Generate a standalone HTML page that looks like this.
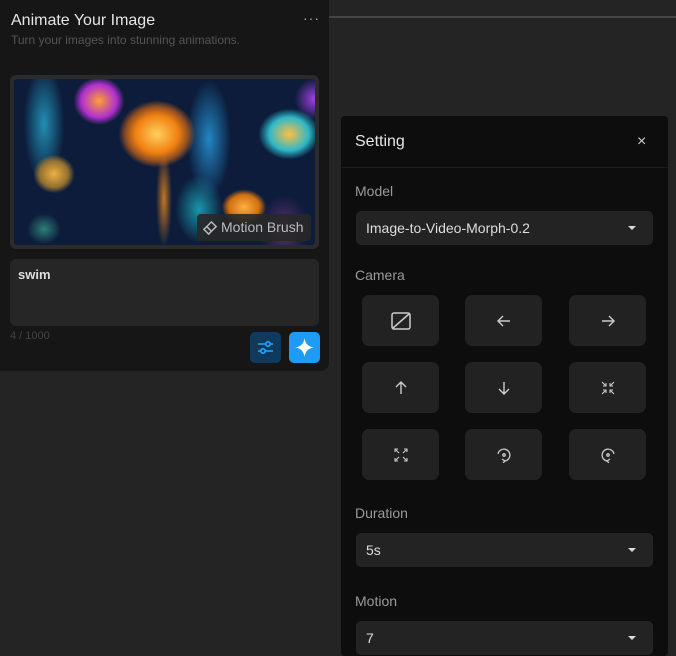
<!DOCTYPE html>
<html><head><meta charset="utf-8"><style>
*{margin:0;padding:0;box-sizing:border-box}
body{width:676px;height:643px;background:#242424;font-family:"Liberation Sans",sans-serif;position:relative;overflow:hidden;color:#ddd}
.abs{position:absolute}
.left{left:0;top:0;width:329px;height:371px;background:#161616;border-radius:0 0 8px 0}
.img{left:10px;top:75px;width:309px;height:174px;border-radius:6px;background:#2b2b2b;padding:4px;overflow:hidden}
.pic{width:100%;height:100%;border-radius:3px;position:relative;overflow:hidden;
background:
radial-gradient(ellipse 48px 42px at 143px 55px,#ffd060,#f08010 45%,rgba(230,110,20,.6) 65%,rgba(0,0,0,0) 80%),
radial-gradient(ellipse 40px 34px at 95px 195px,#ffb030,#a030e0 50%,rgba(120,30,200,.6) 70%,rgba(0,0,0,0) 85%),
radial-gradient(ellipse 32px 30px at 85px 22px,#ffa030,#b030d0 55%,rgba(0,0,0,0) 80%),
radial-gradient(ellipse 36px 30px at 275px 55px,#ffc040,#30b8c8 55%,rgba(40,180,200,.5) 70%,rgba(0,0,0,0) 85%),
radial-gradient(ellipse 26px 24px at 40px 95px,#f0b040,#907030 55%,rgba(0,0,0,0) 80%),
radial-gradient(ellipse 28px 22px at 230px 128px,#ffb040,#d07010 55%,rgba(0,0,0,0) 80%),
radial-gradient(ellipse 10px 60px at 150px 120px,rgba(240,140,30,.8),rgba(0,0,0,0) 80%),
radial-gradient(ellipse 26px 70px at 195px 60px,rgba(40,160,230,.8),rgba(0,0,0,0) 85%),
radial-gradient(ellipse 24px 70px at 30px 45px,rgba(40,170,210,.8),rgba(0,0,0,0) 85%),
radial-gradient(ellipse 28px 40px at 185px 130px,rgba(30,180,200,.8),rgba(0,0,0,0) 85%),
radial-gradient(ellipse 24px 26px at 300px 20px,#a040e0,rgba(0,0,0,0) 80%),
radial-gradient(ellipse 30px 40px at 270px 150px,rgba(150,60,150,.6),rgba(0,0,0,0) 85%),
radial-gradient(ellipse 20px 18px at 30px 150px,rgba(60,170,150,.7),rgba(0,0,0,0) 85%),
#0c1c3a}
.mb{position:absolute;right:4px;bottom:4px;width:114px;height:27px;background:rgba(40,40,40,.9);border-radius:4px;color:#bbb;font-size:14px;line-height:27px;padding-left:24px}
.ta{left:10px;top:259px;width:309px;height:67px;background:#262626;border-radius:6px;padding:8px 8px;font-size:13px;font-weight:bold;color:#ddd}
.btn{top:332px;width:31px;height:31px;border-radius:5px}
.set{left:341px;top:116px;width:327px;height:540px;background:#0d0d0d;border-radius:4px}
.lbl{position:absolute;left:14px;font-size:14px;color:#9a9a9a}
.sel{position:absolute;left:15px;width:297px;height:34px;background:#232323;border-radius:5px;font-size:14px;color:#ddd;line-height:34px;padding-left:10px}
.sel:after{content:"";position:absolute;right:17px;top:15px;border:4px solid transparent;border-top:4px solid #ddd;border-bottom:0}
.cb{position:absolute;width:77px;height:51px;background:#222;border-radius:7px;display:flex;align-items:center;justify-content:center}
svg{display:block}
</style></head><body>
<div class="abs" style="left:329px;top:16px;width:347px;height:2px;background:#444"></div>
<div class="abs left">
  <div class="abs" style="left:11px;top:12px;font-size:16px;color:#e6e6e6">Animate Your Image</div>
  <div class="abs" style="left:11px;top:33px;font-size:12px;color:#555">Turn your images into stunning animations.</div>
  <div class="abs" style="left:303px;top:10px;font-size:14px;color:#aaa;letter-spacing:1px">···</div>
  <div class="abs img"><div class="pic"><div class="mb"><svg class="abs" style="left:6px;top:6px" width="15" height="15" viewBox="0 0 16 16" fill="none" stroke="#bbb" stroke-width="1.6"><path d="M9 2l5 5-5 5-5-5zM4 7l-3 3 5 5 3-3"/></svg>Motion Brush</div></div></div>
  <div class="abs ta">swim</div>
  <div class="abs" style="left:10px;top:330px;font-size:11px;color:#444">4 / 1000</div>
  <div class="abs btn" style="left:250px;background:#0f3a5e"><svg width="31" height="31" viewBox="0 0 31 31" fill="none" stroke="#2aa3ff" stroke-width="1.6"><path d="M8 12h15M8 19h15"/><circle cx="18" cy="12" r="2.2" fill="#0f3a5e"/><circle cx="13" cy="19" r="2.2" fill="#0f3a5e"/></svg></div>
  <div class="abs btn" style="left:289px;background:#1e9bf4"><svg width="31" height="31" viewBox="0 0 31 31"><path d="M15.5 6Q16.5 14.5 25 15.5Q16.5 16.5 15.5 25Q14.5 16.5 6 15.5Q14.5 14.5 15.5 6Z" fill="#fff"/></svg></div>
</div>
<div class="abs set">
  <div class="abs" style="left:14px;top:17px;font-size:16px;color:#e6e6e6">Setting</div>
  <div class="abs" style="left:296px;top:17px;font-size:16px;color:#ccc">×</div>
  <div class="abs" style="left:0;top:51px;width:327px;height:1px;background:#1c1c1c"></div>
  <div class="lbl" style="top:67px">Model</div>
  <div class="sel" style="top:95px">Image-to-Video-Morph-0.2</div>
  <div class="lbl" style="top:151px">Camera</div>
  <div class="cb" style="left:21px;top:179px"><svg width="20" height="20" viewBox="0 0 20 20" fill="none" stroke="#ccc" stroke-width="1.5"><rect x="1" y="2" width="18" height="16" rx="2"/><path d="M2 17L18 3"/></svg></div>
  <div class="cb" style="left:124px;top:179px"><svg width="16" height="16" viewBox="0 0 16 16" fill="none" stroke="#ccc" stroke-width="1.4"><path d="M14 8H2M7 3L2 8l5 5"/></svg></div>
  <div class="cb" style="left:228px;top:179px"><svg width="16" height="16" viewBox="0 0 16 16" fill="none" stroke="#ccc" stroke-width="1.4"><path d="M2 8h12M9 3l5 5-5 5"/></svg></div>
  <div class="cb" style="left:21px;top:246px"><svg width="16" height="16" viewBox="0 0 16 16" fill="none" stroke="#ccc" stroke-width="1.4"><path d="M8 14V2M3 7l5-5 5 5"/></svg></div>
  <div class="cb" style="left:124px;top:246px"><svg width="16" height="16" viewBox="0 0 16 16" fill="none" stroke="#ccc" stroke-width="1.4"><path d="M8 2v12M3 9l5 5 5-5"/></svg></div>
  <div class="cb" style="left:228px;top:246px"><svg width="14" height="14" viewBox="0 0 14 14" fill="none" stroke="#ccc" stroke-width="1.1"><path d="M1 1l4 4M5 2v3H2M13 1L9 5M9 2v3h3M1 13l4-4M2 9h3v3M13 13L9 9M12 9H9v3"/></svg></div>
  <div class="cb" style="left:21px;top:313px"><svg width="14" height="14" viewBox="0 0 14 14" fill="none" stroke="#ccc" stroke-width="1.1"><path d="M1 1l4 4M1 4V1h3M13 1L9 5M10 1h3v3M1 13l4-4M1 10v3h3M13 13L9 9M13 10v3h-3"/></svg></div>
  <div class="cb" style="left:124px;top:313px"><svg width="16" height="16" viewBox="0 0 16 16" fill="none" stroke="#ccc" stroke-width="1.3"><path d="M2 7a6 6 0 1 1 7 7M6 12l3 2-2 2"/><circle cx="8" cy="8" r="1.2"/></svg></div>
  <div class="cb" style="left:228px;top:313px"><svg width="16" height="16" viewBox="0 0 16 16" fill="none" stroke="#ccc" stroke-width="1.3"><path d="M14 7a6 6 0 1 0-7 7M10 12l-3 2 2 2"/><circle cx="8" cy="8" r="1.2"/></svg></div>
  <div class="lbl" style="top:389px">Duration</div>
  <div class="sel" style="top:417px">5s</div>
  <div class="lbl" style="top:477px">Motion</div>
  <div class="sel" style="top:505px">7</div>
</div>
</body></html>
